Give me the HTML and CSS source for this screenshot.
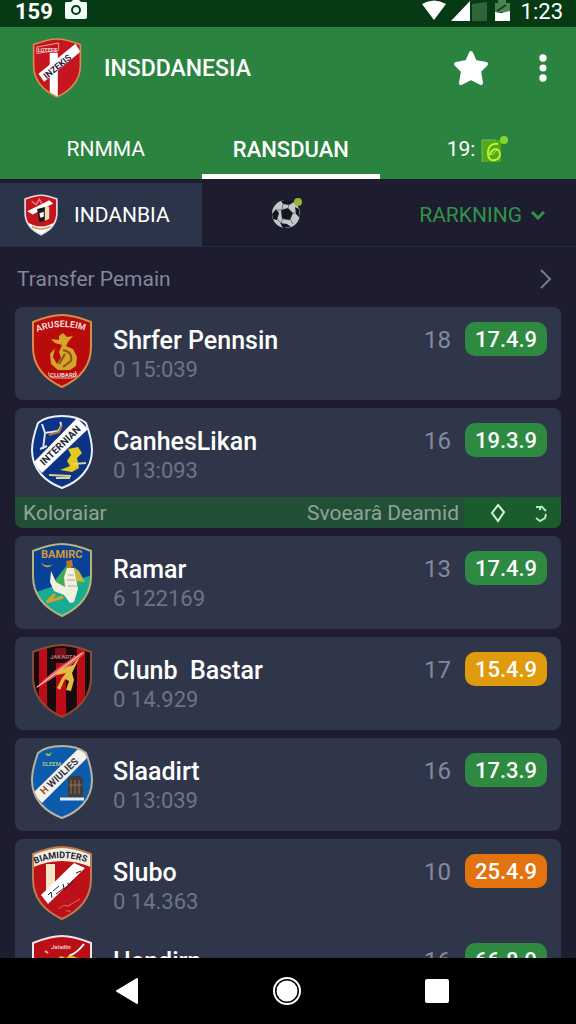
FILE: index.html
```html
<!DOCTYPE html>
<html lang="id">
<head>
<meta charset="utf-8">
<meta name="viewport" content="width=device-width, initial-scale=1">
<title>Transfer Pemain</title>
<link rel="stylesheet" href="styles.css">
</head>
<body>
<svg class="defs" aria-hidden="true">
  <defs>
    <path id="shield" d="M31 1C23 1 12 4 2 8V33C2 54 16 66 31 73C46 66 60 54 60 33V8C50 4 39 1 31 1Z"/>
    <path id="round-shield" d="M31 1C22 1 13 3 7 8C3 19 1 27 1 35C1 55 15 67 31 73C47 67 61 55 61 35C61 27 59 19 55 8C49 3 40 1 31 1Z"/>
    <clipPath id="clip-shield"><use href="#shield"/></clipPath>
    <clipPath id="clip-round"><use href="#round-shield"/></clipPath>
  </defs>
</svg>
<div class="screen">
  <div class="status">
    <div class="status-group">
      <span class="status-code">159</span>
      <svg width="22" height="20" viewBox="0 0 22 20"><path fill="#f2fff4" d="M1 2H6L8 0H14L16 2H21Q22 2 22 4V17Q22 19 20 19H2Q0 19 0 17V4Q0 2 1 2Z"/><circle cx="11" cy="10" r="4" fill="none" stroke="#063a15" stroke-width="2"/></svg>
    </div>
    <div class="status-group status-right">
      <svg width="89" height="22" viewBox="0 0 89 22"><path fill="#fff" d="M0 4Q12-3 24 4L12 20ZM29 21L48 1V21Z"/><path fill="#2e6639" d="M50 4L65 2V21H50Z"/><path fill="#4a8454" d="M73 3H76V0H84V3H88V12H73Z"/><path fill="#fff" d="M73 12L79 13L88 11V21H73Z"/><path d="M75 11L84 5" stroke="#16401f" stroke-width="2"/></svg>
      <span class="clock">1:23</span>
    </div>
  </div>

  <header class="appbar">
    <svg class="logo" viewBox="0 0 62 74">
      <g clip-path="url(#clip-shield)"><path fill="#c51620" d="M0 0H62V74H0Z"/><path fill="#fff" d="M22 18H32V74H22Z"/><path fill="#fff" d="M8 44L54 7L60 17L15 54Z"/><path fill="none" stroke="#e9c9c6" d="M6 11L33 6V15L6 19Z"/><text x="7" y="17" class="crest-text" fill="#f0d5d2" font-size="7">LOTEFE</text><text x="18" y="51" class="crest-text" fill="#2b1d3c" font-size="11" transform="rotate(-39 18 51)">INZEKIS</text></g>
      <use href="#shield" fill="none" stroke="#d98a4f" stroke-width="2"/>
    </svg>
    <h1 class="title">INSDDANESIA</h1>
    <button class="icon-btn" aria-label="Favorit"><svg width="36" height="36" viewBox="0 0 36 36"><path d="M18 3L22 12L33 14L26 21L28 33L18 28L8 33L10 21L3 14L14 12Z" fill="#fff" stroke="#fff" stroke-width="4" stroke-linejoin="round"/></svg></button>
    <button class="icon-btn menu-btn" aria-label="Menu"><svg width="8" height="28" viewBox="0 0 8 28"><g fill="#fff"><circle cx="4" cy="4" r="3.7"/><circle cx="4" cy="14" r="3.5"/><circle cx="4" cy="24" r="3.7"/></g></svg></button>
  </header>

  <nav class="tabs">
    <a class="tab tab-first" href="#ramma">RNMMA</a>
    <a class="tab tab-active" href="#transfer" aria-current="page">RANSDUAN</a>
    <a class="tab tab-score" href="#skor">19:
      <svg width="28" height="28" viewBox="0 0 28 28"><path fill="#4eaa19" d="M1 5H20V27H1Z"/><path d="M1 27V5H15" fill="none" stroke="#72bd62"/><path d="M17 9C10 8 7 12 7 18C7 24 10 26 14 25C19 24 20 19 18 16C15 12 10 15 9 20" fill="none" stroke="#c6ec3c" stroke-width="2"/><path d="M11 20L16 15" stroke="#c6ec3c"/><circle cx="23" cy="5" r="4" fill="#84d62b"/></svg></a>
  </nav>

  <nav class="subtabs">
    <a class="subtab subtab-active" href="#indanbia">
      <svg class="mini-crest" viewBox="0 0 62 74"><g clip-path="url(#clip-shield)"><path fill="#c4141d" d="M0 0H62V74H0Z"/><path fill="#fff" d="M0 46Q31 70 62 46V74H0Z"/><path fill="#fff" d="M6 30L46 10L53 16L16 36Z"/><path fill="#1d1820" d="M24 26L40 22L38 48L28 50Z"/><path fill="#fff" d="M28 34L36 31V40L30 42Z"/><path fill="#f0dcae" d="M38 22H46V44L38 48Z"/><path fill="none" stroke="#e2747a" stroke-width="3" d="M14 12L22 18L28 8L32 16"/><path fill="none" stroke="#caa14c" stroke-width="3" d="M14 58Q31 67 48 58"/></g><use href="#shield" fill="none" stroke="#e5dce9" stroke-width="3"/></svg>
      INDANBIA</a>
    <a class="subtab subtab-ball" href="#bola" aria-label="Bola">
      <svg width="32" height="34" viewBox="0 0 32 34"><circle cx="15" cy="18" r="14" fill="#c3c7cb"/><path fill="#15161e" d="M10 14L17 12L22 17L19 24L11 23ZM10 5Q18 2 23 6L18 9L12 8ZM1 18L5 13L8 17L6 24L2 23ZM24 11L28 13L29 22L25 18ZM9 27L16 28L20 31L12 32Z"/><path d="M12 8L11 14L5 14M18 9L17 12M22 17H25M19 23L22 28M12 22L10 27L6 23" fill="none" stroke="#6e737c"/><circle cx="27" cy="6" r="4" fill="#9bb52c"/></svg></a>
    <a class="subtab subtab-rank" href="#ranking">RARKNING
      <svg width="14" height="10" viewBox="0 0 14 10"><path d="M1 2L7 8L13 2" fill="none" stroke="#2f9447" stroke-width="3"/></svg></a>
  </nav>

  <main class="content">
    <a class="section-head" href="#transfer"><span>Transfer Pemain</span>
      <svg width="14" height="22" viewBox="0 0 14 22"><path d="M2 2L11 11L2 20" fill="none" stroke="#777b8b" stroke-width="2"/></svg></a>

    <div class="list">
      <article class="card">
        <div class="row">
          <svg class="crest" viewBox="0 0 62 74"><use href="#shield" fill="#b80b0c" stroke="#d98c45" stroke-width="2"/><path id="arc-a" d="M6 18Q31 8 58 18" fill="none"/><text class="crest-text" fill="#f3dcd4" font-size="9"><textPath href="#arc-a">ARUSELEIM</textPath></text><path fill="#d6a32b" d="M28 22L32 19L36 23L42 22L37 28L35 32L42 35L46 43L45 52L39 56H27L20 50L19 40L24 34L22 43L26 50L30 44L28 38L31 31L24 29L20 25L28 26Z"/><path d="M32 36Q42 38 40 47L32 53M34 40L28 50" fill="none" stroke="#87560f" stroke-width="2"/><path d="M18 58Q16 64 24 64H40Q48 62 44 57" fill="none" stroke="#edb9a9"/><text x="19" y="63" class="crest-text" fill="#f3dcd4" font-size="6">CLUBARD</text></svg>
          <div class="info"><h2 class="name">Shrfer Pennsin</h2><p class="meta">0 15:039</p></div>
          <span class="count">18</span><span class="pill">17.4.9</span>
        </div>
      </article>

      <article class="card">
        <div class="row">
          <svg class="crest" viewBox="0 0 62 74"><g clip-path="url(#clip-round)"><path fill="#0d3484" d="M0 0H62V74H0Z"/><path fill="#fff" d="M2 48L46 3L57 14L11 58Z"/><text x="13" y="51" class="crest-text" fill="#232637" font-size="10" transform="rotate(-44 13 51)">INTERNIAN</text><path d="M11 9L14 18L27 16Q32 10 29 7M14 18L12 34M9 34L16 31" fill="none" stroke="#e2e3ec" stroke-width="2"/><path d="M18 20L28 17L31 10" fill="none" stroke="#b97832" stroke-width="2"/><path fill="#e6c91e" d="M37 34L47 32L51 38L46 43L48 53L41 57L29 55L39 51L36 46L40 40Z"/><path d="M18 60L40 61M42 49L55 48M25 63H39" stroke="#d8d495" stroke-width="2"/></g><use href="#round-shield" fill="none" stroke="#eef0fa" stroke-width="2"/></svg>
          <div class="info"><h2 class="name">CanhesLikan</h2><p class="meta">0 13:093</p></div>
          <span class="count">16</span><span class="pill">19.3.9</span>
        </div>
        <div class="strip">
          <span class="strip-label">Koloraiar</span><span class="strip-value">Svoearâ Deamid</span>
          <div class="strip-actions">
            <button class="icon-btn" aria-label="Detail"><svg width="16" height="20" viewBox="0 0 16 20"><path d="M8 2L14 9L8 18L2 10Z" fill="none" stroke="#d5f6d5" stroke-width="2"/></svg></button>
            <button class="icon-btn" aria-label="Muat ulang"><svg width="16" height="20" viewBox="0 0 16 20"><path d="M3 4L7 4M8 3L13 8M7 3V7M13 11L12 15L7 18L3 15" fill="none" stroke="#b9e5bd" stroke-width="2"/></svg></button>
          </div>
        </div>
      </article>

      <article class="card">
        <div class="row">
          <svg class="crest" viewBox="0 0 62 74"><g clip-path="url(#clip-shield)"><path fill="#0a4198" d="M0 0H62V74H0Z"/><path fill="#18ad93" d="M0 51L20 44L62 32V74H0Z"/><path fill="#43a95c" d="M22 40L36 22L45 27L53 39L36 50Z"/><text x="10" y="15" class="crest-text" fill="#d59b36" font-size="11">BAMIRC</text><path d="M10 19Q14 25 23 21L18 24Q12 25 10 19Z" fill="#d1a941"/><path fill="#b67b24" d="M35 18L41 17L42 24L36 26Z"/><path fill="#cbb43d" d="M43 24L48 28L54 39L45 38Z"/><path fill="#f2f0e1" d="M36 25L43 25L45 36L47 46L43 59L39 60L33 52L23 48L19 39L20 28L25 39L34 44L33 34Z"/><path d="M24 51L16 59L32 54" fill="none" stroke="#d5a22b" stroke-width="3"/><path d="M37 32H43M36 37H44M37 43H46" stroke="#a8aaa0"/></g><use href="#shield" fill="none" stroke="#b8b477" stroke-width="2"/></svg>
          <div class="info"><h2 class="name">Ramar</h2><p class="meta">6 122169</p></div>
          <span class="count">13</span><span class="pill">17.4.9</span>
        </div>
      </article>

      <article class="card">
        <div class="row">
          <svg class="crest" viewBox="0 0 62 74"><g clip-path="url(#clip-shield)"><path fill="#180b10" d="M0 0H62V74H0Z"/><path fill="#bd0c15" d="M8 0H16V74H8ZM25 19H35V74H25ZM46 0H54V74H46Z"/><path fill="#7a101a" d="M24 4H35V13H24Z"/><text x="19" y="15" class="crest-text" fill="#cb6a65" font-size="6">JAKARTA</text><path fill="#ed595c" d="M4 45Q22 25 53 7L53 10Q34 28 4 45Z"/><path d="M6 43Q29 26 51 9" fill="none" stroke="#fbdccc"/><path fill="#e8bb3e" d="M36 23L42 21L49 12L44 23L41 29L43 36L40 47L35 46L38 37L34 35L29 46L26 44L31 34L35 29L26 31L25 28Z"/></g><use href="#shield" fill="none" stroke="#8d4b30" stroke-width="2"/></svg>
          <div class="info"><h2 class="name">Clunb &nbsp;Bastar</h2><p class="meta">0 14.929</p></div>
          <span class="count">17</span><span class="pill pill-amber">15.4.9</span>
        </div>
      </article>

      <article class="card">
        <div class="row">
          <svg class="crest" viewBox="0 0 62 74"><g clip-path="url(#clip-round)"><path fill="#0c5bac" d="M0 0H62V74H0Z"/><path fill="#f5f2ea" d="M2 48L47 4L59 10L11 58Z"/><text x="13" y="50" class="crest-text" fill="#343a4c" font-size="10" transform="rotate(-43 13 50)"><tspan fill="#8e5222">H</tspan> WIULIES</text><path fill="#9eb94b" d="M14 8L18 9L21 7L19 11H16Z"/><text x="11" y="21" class="crest-text" fill="#a9bb82" font-size="6">SLEEM</text><path fill="#433b37" d="M37 33L41 31H49L52 34V52H37Z"/><path d="M40 35V49M44 35V49M48 35V49M38 40H51" stroke="#8f7952"/><path d="M29 54H53" stroke="#e6ecef" stroke-width="3"/></g><use href="#round-shield" fill="none" stroke="#bab29a" stroke-width="2"/></svg>
          <div class="info"><h2 class="name">Slaadirt</h2><p class="meta">0 13:039</p></div>
          <span class="count">16</span><span class="pill">17.3.9</span>
        </div>
      </article>

      <article class="card">
        <div class="row">
          <svg class="crest" viewBox="0 0 62 74"><g clip-path="url(#clip-shield)"><path fill="#bd111a" d="M0 0H62V74H0Z"/><path fill="#f5eddb" d="M0 8Q31-6 62 8V22Q31 8 0 22Z"/><path fill="#f6e5c4" d="M15 18H24V45H15Z"/><path fill="#fff" d="M10 49L43 17L54 22L17 58Z"/><path id="arc-b" d="M4 18Q31 6 60 18" fill="none"/><text class="crest-text" fill="#18253b" font-size="9"><textPath href="#arc-b">BIAMIDTERS</textPath></text><path d="M17 49L20 46L21 52M22 45L28 40M25 48L33 42L32 38M36 37L39 39L43 34M45 27L50 25M33 43L38 40" fill="none" stroke="#21232e"/><path d="M28 63Q31 58 37 60L42 57L49 53M35 65H40" fill="none" stroke="#de6a62"/></g><use href="#shield" fill="none" stroke="#b97b4f" stroke-width="2"/></svg>
          <div class="info"><h2 class="name">Slubo</h2><p class="meta">0 14.363</p></div>
          <span class="count">10</span><span class="pill pill-orange">25.4.9</span>
        </div>
        <div class="row">
          <svg class="crest" viewBox="0 0 62 74"><use href="#shield" fill="#b90f17" stroke="#f0e5ed" stroke-width="2"/><path d="M53 9Q46 18 38 21" fill="none" stroke="#fff" stroke-width="2"/><text x="20" y="14" class="crest-text" fill="#f3c3bb" font-size="6">Jaladin</text><path fill="#e5bd22" d="M25 25L30 21L35 23L39 20L47 23L46 34H22Z"/><path d="M14 16L17 18" stroke="#eab0ad" stroke-width="2"/></svg>
          <div class="info"><h2 class="name">Hendirn</h2><p class="meta">0 14.363</p></div>
          <span class="count">16</span><span class="pill">66.8.9</span>
        </div>
      </article>
    </div>
  </main>

  <footer class="navbar">
    <button class="icon-btn" aria-label="Kembali"><svg width="24" height="28" viewBox="0 0 24 28"><path d="M2 14L22 2V26Z" fill="#fff" stroke="#fff" stroke-width="2" stroke-linejoin="round"/></svg></button>
    <button class="icon-btn home-btn" aria-label="Beranda"><svg width="28" height="28" viewBox="0 0 28 28"><circle cx="14" cy="14" r="13" fill="none" stroke="#fff" stroke-width="2"/><circle cx="14" cy="14" r="10.5" fill="#fff"/></svg></button>
    <button class="icon-btn" aria-label="Terbaru"><svg width="24" height="24" viewBox="0 0 24 24"><rect width="24" height="24" rx="2" fill="#fff"/></svg></button>
  </footer>
</div>
</body>
</html>
```
FILE: styles.css
```css
* {
  box-sizing: border-box;
}

body {
  margin: 0;
  background: #1d1d2f;
  color: #fff;
  font-family: Roboto, "Liberation Sans", sans-serif;
}

h1,
h2,
p {
  margin: 0;
}

a {
  color: inherit;
  text-decoration: none;
}

svg {
  display: block;
  flex: none;
}

.defs {
  position: absolute;
  width: 0;
  height: 0;
}

.crest-text {
  font-family: Roboto, sans-serif;
  font-weight: 700;
}

.icon-btn {
  display: flex;
  padding: 0;
  border: 0;
  background: none;
}

.screen {
  display: flex;
  flex-direction: column;
  height: 100vh;
}

.status {
  display: flex;
  flex: none;
  justify-content: space-between;
  height: 27px;
  padding: 0 13px 0 15px;
  background: #063a15;
}

.status-group {
  display: flex;
  gap: 12px;
}

.status-code,
.clock {
  font-size: 22px;
  line-height: 24px;
}

.status-code {
  font-weight: 700;
}

.status-right {
  gap: 10px;
}

.appbar {
  display: flex;
  flex: none;
  align-items: center;
  height: 82px;
  padding: 0 29px 0 32px;
  background: #2a833e;
}

.logo {
  width: 50px;
  height: 60px;
}

.title {
  flex: 1;
  padding-left: 22px;
  font-size: 23px;
  font-weight: 500;
}

.menu-btn {
  margin-left: 50px;
}

.tabs,
.subtabs {
  display: grid;
  flex: none;
  grid-template-columns: 35fr 31fr 34fr;
}

.tabs {
  height: 70px;
  background: #2a833e;
}

.tab,
.subtab {
  display: flex;
  align-items: center;
  justify-content: center;
  font-size: 21px;
}

.tab {
  padding-top: 10px;
  border-bottom: 0 solid #fff;
}

.tab-first {
  padding-left: 10px;
}

.tab-active {
  padding-top: 15px;
  border-bottom-width: 5px;
  font-size: 22px;
  font-weight: 500;
}

.tab-score {
  gap: 6px;
}

.subtabs {
  height: 68px;
  padding-top: 4px;
  border-bottom: 1px solid #2a2d3e;
}

.subtab-active {
  gap: 16px;
  padding-right: 8px;
  background: #2c3449;
}

.mini-crest {
  width: 34px;
  height: 42px;
}

.subtab-ball {
  padding: 0 8px 4px 0;
}

.subtab-rank {
  gap: 9px;
  padding-left: 8px;
  color: #2f9447;
}

.content {
  flex: 1;
  min-height: 0;
  overflow-y: auto;
  scrollbar-width: none;
}

.section-head {
  display: flex;
  align-items: center;
  justify-content: space-between;
  height: 60px;
  padding: 4px 23px 0 17px;
  color: #84879a;
  font-size: 21px;
}

.list {
  display: flex;
  flex-direction: column;
  gap: 8px;
  padding: 0 15px;
}

.card {
  overflow: hidden;
  border-radius: 8px;
  background: #30364a;
}

.row {
  display: flex;
  align-items: flex-start;
  height: 89px;
  padding: 7px 14px 0 16px;
}

.row:only-child {
  height: 93px;
}

.crest {
  width: 62px;
  height: 74px;
}

.info {
  flex: 1;
  padding: 11px 0 0 20px;
}

.name {
  font-size: 25px;
  font-weight: 500;
  line-height: 32px;
}

.meta {
  color: #6d7486;
  font-size: 22px;
  line-height: 26px;
}

.count {
  padding: 10px 14px 0 0;
  color: #848a9c;
  font-size: 24px;
  line-height: 32px;
}

.pill {
  width: 82px;
  margin-top: 8px;
  padding-top: 1px;
  border-radius: 10px;
  background: #2d8a40;
  font-size: 22px;
  font-weight: 500;
  line-height: 33px;
  text-align: center;
}

.pill-amber {
  background: #e09b0c;
}

.pill-orange {
  background: #e2730f;
}

.strip {
  display: flex;
  align-items: center;
  height: 31px;
  padding-left: 8px;
  background: #215037;
  color: #8da597;
  font-size: 21px;
  line-height: 30px;
}

.strip-label {
  flex: 1;
}

.strip-value {
  padding-right: 5px;
}

.strip-actions {
  display: flex;
  align-items: center;
  align-self: stretch;
  justify-content: space-between;
  width: 97px;
  padding: 0 12px 0 26px;
  background: #1b5c2c;
}

.navbar {
  display: flex;
  flex: none;
  align-items: center;
  justify-content: space-between;
  height: 66px;
  padding: 0 22% 0 20%;
  background: #000;
}

.home-btn {
  margin-left: 10px;
}
```
